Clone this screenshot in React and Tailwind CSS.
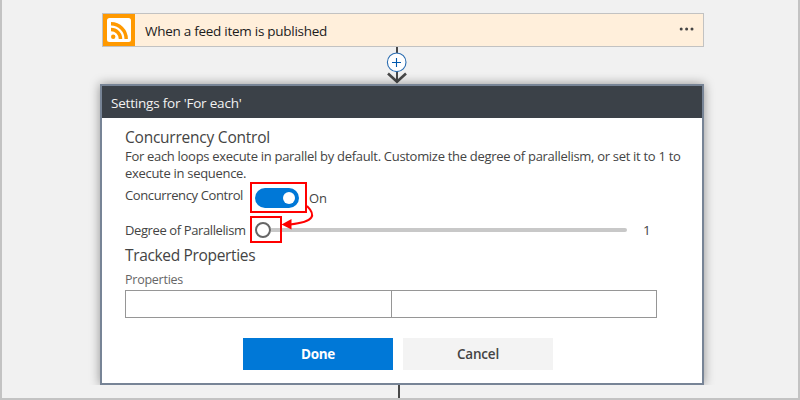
function FeedIcon() {
  return (
    <svg width="32" height="32" viewBox="0 0 32 32" className="block bg-[#ff9900]">
      <rect x="4" y="4" width="24" height="24" rx="2.5" fill="#fff" />
      <circle cx="10.2" cy="22.8" r="2.2" fill="#ff9900" />
      <path d="M8 15.5A9.5 9.5 0 0 1 17.5 25M8 9.8A15.2 15.2 0 0 1 23.2 25" fill="none" stroke="#ff9900" strokeWidth="3.4" />
    </svg>
  );
}

function Connector() {
  return (
    <svg width="24" height="37" viewBox="0 0 24 37" className="ml-[383px] block">
      <path d="M12 0V35" stroke="#484848" strokeWidth="2" />
      <path d="M3 26.5L12 34.8L21 26.5" fill="none" stroke="#484848" strokeWidth="2.6" />
      <circle cx="11.7" cy="15.3" r="9.3" fill="#fff" stroke="#2a6cb0" strokeWidth="1.1" />
      <path d="M7 15.5H16M11.5 11V20" stroke="#0058ad" strokeWidth="1.1" />
    </svg>
  );
}

export default function App() {
  return (
    <div className="h-[400px] w-[800px] overflow-hidden whitespace-nowrap border-x-2 border-b-2 border-[#c3c3c3] bg-[#f1f1f1] font-['Open_Sans','Noto_Sans',sans-serif] text-[#444]">
      <div className="h-[385px] overflow-hidden pt-[13px]">
        <div className="ml-[100px] flex h-[34px] w-[602px] items-center border border-[#c2c2c2] bg-[#ffefdb]">
          <FeedIcon />
          <span className="ml-[10px] mt-[1px] text-[13.5px] leading-[18px] tracking-[-0.27px] text-[#1c1c1c]">When a feed item is published</span>
          <svg width="16" height="4" viewBox="0 0 16 4" className="ml-auto mr-[8px] mt-[-2px]" fill="#444">
            <circle cx="2.2" cy="2" r="1.5" />
            <circle cx="7.6" cy="2" r="1.5" />
            <circle cx="13" cy="2" r="1.5" />
          </svg>
        </div>
        <Connector />
        <div className="relative ml-[98px] h-[301px] w-[604px] border-2 border-[#778496] bg-white shadow-[0_0_10px_rgba(0,0,0,0.4)]">
          <div className="h-8 bg-[#3b4148] pl-[9px] pt-[8px] text-[13.5px] leading-[18px] tracking-[-0.2px] text-[#f2f2f2]">Settings for 'For each'</div>
          <div className="pl-[23px]">
            <h2 className="mt-[8px] h-[22px] text-[15.5px] leading-[22px] tracking-[-0.23px]">Concurrency Control</h2>
            <p className="h-[34px] text-[13px] leading-[17px] tracking-[-0.3px]">
              For each loops execute in parallel by default. Customize the degree of parallelism, or set it to 1 to
              <br />
              execute in sequence.
            </p>
            <div className="flex h-[31px]">
              <span className="w-[125px] pt-[4px] text-[13px] leading-[18px] tracking-[-0.38px]">Concurrency Control</span>
              <div className="flex h-[31px] w-[57px] items-center border-2 border-[#ff0000] pl-[3px]">
                <div className="flex h-5 w-11 items-center justify-end rounded-full bg-[#0078d7] pr-[4.5px]">
                  <div className="size-[12px] rounded-full bg-white" />
                </div>
              </div>
              <span className="ml-[2px] pt-[7px] text-[13px] leading-[18px]">On</span>
            </div>
            <div className="mt-[3px] flex h-[27px]">
              <span className="w-[125px] pt-[5px] text-[13px] leading-[18px] tracking-[-0.39px]">Degree of Parallelism</span>
              <div className="flex h-[27px] w-8 shrink-0 items-center border-2 border-[#ff0000] pl-[3px]">
                <div className="size-4 shrink-0 rounded-full border-2 border-[#666] bg-white" />
                <div className="h-1 flex-1 bg-[#c8c8c8]" />
              </div>
              <div className="mt-[12px] h-1 w-[345px] rounded-r-full bg-[#c8c8c8]" />
              <span className="ml-[16px] pt-[5px] text-[13.5px] leading-[18px]">1</span>
            </div>
            <h2 className="mt-[1px] h-[22px] text-[15.5px] leading-[22px] tracking-[-0.34px]">Tracked Properties</h2>
            <div className="mt-[4px] h-[20px] text-[12.5px] leading-[20px] tracking-[-0.25px] text-[#666]">Properties</div>
            <div className="flex h-[28px] w-[532px] border border-[#969696]">
              <div className="w-[266px] border-r border-[#969696]" />
            </div>
            <div className="ml-[118px] mt-5 flex gap-[10px] text-[13.5px]">
              <button className="h-8 w-[150px] bg-[#0078d7] pt-px font-bold tracking-[-0.3px] text-white">Done</button>
              <button className="h-8 w-[150px] bg-[#f3f3f3] pt-px font-semibold tracking-[-0.2px]">Cancel</button>
            </div>
          </div>
          <svg width="40" height="30" viewBox="280 204 40 30" className="absolute left-[178px] top-[118px]">
            <path d="M307 206C316 215 315 222 290 224.5" fill="none" stroke="#ff0000" strokeWidth="2" />
            <path d="M281.5 224.5L291.5 219V229.5Z" fill="#ff0000" />
          </svg>
        </div>
      </div>
      <div className="ml-[396px] h-[13px] w-[2px] bg-[#484848]" />
    </div>
  );
}
